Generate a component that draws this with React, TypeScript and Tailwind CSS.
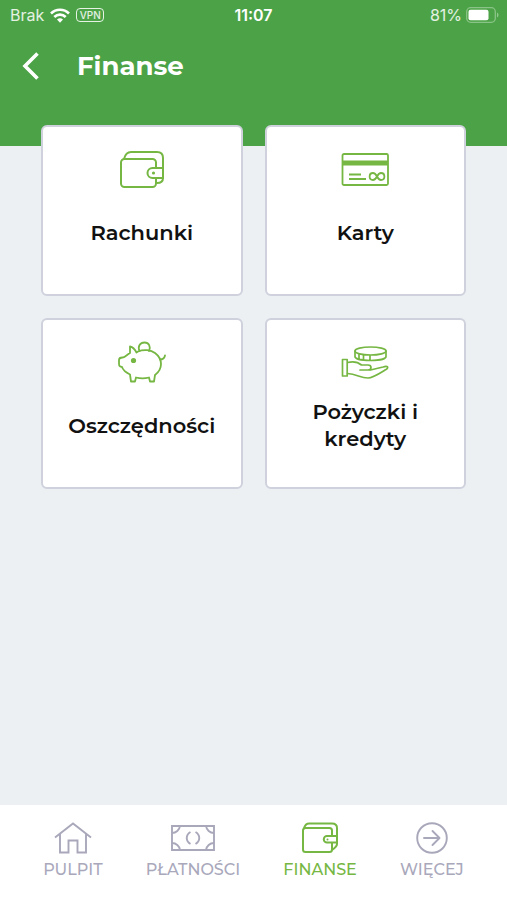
import type { ReactNode } from "react";

function WalletIcon({ className }: { className: string }) {
  return (
    <svg viewBox="0 0 48 48" className={className} fill="none" stroke="currentColor" strokeWidth="2" strokeLinejoin="round" aria-hidden="true">
      <rect x="3" y="13" width="35" height="28" rx="3.500" />
      <path d="M6 13c1-4 3-7 7-7h26c4 0 6 2 6 6v20c0 3-2 5-6 5" />
      <path d="M45 22v10H34.500a5 5 0 0 1 0-10z" fill="#fff" />
      <circle cx="35.500" cy="27" r="1.600" fill="currentColor" stroke="none" />
    </svg>
  );
}

function ActiveWalletIcon() {
  return (
    <svg viewBox="0 0 38 32" className="h-8 w-[38px]" fill="none" stroke="currentColor" strokeWidth="2" strokeLinejoin="round" aria-hidden="true">
      <rect x="2" y="6" width="29" height="24" rx="2.500" />
      <path d="M3 6c1-3 3-4.500 5-4.500h23c3.500 0 5 2 5 4.500v16c0 2.500-2 4-5 6" />
      <path d="M36 14v6.500H26a3.250 3.250 0 0 1 0-6.500z" fill="#fff" />
      <circle cx="26.500" cy="17.500" r="1" fill="currentColor" stroke="none" />
    </svg>
  );
}

function CardIcon() {
  return (
    <svg viewBox="0 0 48 48" className="size-12" fill="none" stroke="currentColor" strokeWidth="1.800" aria-hidden="true">
      <rect x="1.500" y="8" width="45.500" height="31" rx="1.500" />
      <path d="M1 17h46" strokeWidth="5" />
      <path d="M8 28.500h12M8 33h17" />
      <path d="M36 30.500c-1-2-2-3.500-4-3.500-4.500 0-4.500 7 0 7 2 0 3-1.500 4-3.500s2-3.500 4-3.500c4.500 0 4.500 7 0 7-2 0-3-1.500-4-3.500z" />
    </svg>
  );
}

function PiggyIcon() {
  return (
    <svg viewBox="0 0 48 48" className="size-12" fill="none" stroke="currentColor" strokeWidth="1.800" strokeLinecap="round" strokeLinejoin="round" aria-hidden="true">
      <path d="M20 12.500c6-2.500 13-1.500 17 1.500 4 3 6 7 6 11 0 5-2 8-6 11l-1 6.500h-4l-1-4c-4 1-9 1-13 0l-1 4h-4l-1-7C8 33.500 5 31 4 28c-3-.5-3-1.500-3-4v-3c0-1.500 1.500-2.500 3.500-2.500 2 0 4-2.500 7.500-4.500V7.500c3 .5 5 3 6.500 6z" />
      <path d="M21.500 12c-2-4.500.5-8.500 5-8.500S33 7.500 31 12" />
      <path d="M42 20.500c3 0 4.500-1.500 5-4" />
      <circle cx="15.500" cy="21.500" r="2.600" fill="currentColor" stroke="none" />
    </svg>
  );
}

function LoanIcon() {
  return (
    <svg viewBox="0 0 48 48" className="size-12" fill="none" stroke="currentColor" strokeWidth="1.700" strokeLinecap="round" strokeLinejoin="round" aria-hidden="true">
      <ellipse cx="29.500" cy="12" rx="15.500" ry="4" />
      <path d="M14 12v5.500c0 2.500 7 4 15.500 4S45 20 45 17.500V12M18 15v5M22.500 16v5M29 16.500v5" />
      <path d="M1.500 20.500h4.700V37H1.500zM6.500 23.500c6-1.500 10-1 14 2.500h6.500c4 0 4 5 0 5h-8" />
      <path d="M29.500 31L42 28c5-1.500 6 .5 3 2.500-5 3-13 8.500-18 8.500-8 0-11-4-20.500-4.500" />
    </svg>
  );
}

function HomeIcon() {
  return (
    <svg viewBox="0 0 38 32" className="h-8 w-[38px]" fill="none" stroke="currentColor" strokeWidth="1.900" aria-hidden="true">
      <path d="M1 15.500L19 1.500l18 14M6 12v18.500h8.500V18.500h9v12H32V12" />
    </svg>
  );
}

function BanknoteIcon() {
  return (
    <svg viewBox="0 0 44 32" className="h-8 w-11" fill="none" stroke="currentColor" strokeWidth="1.900" aria-hidden="true">
      <path d="M1 4h42v24H1z" />
      <path d="M9 4a8 8 0 0 1-8 7M35 4a8 8 0 0 0 8 7M9 28a8 8 0 0 0-8-7M35 28a8 8 0 0 1 8-7" />
      <path d="M19.500 10c-5 3-5 9 0 12M24.500 10c5 3 5 9 0 12" />
    </svg>
  );
}

function MoreIcon() {
  return (
    <svg viewBox="0 0 32 32" className="size-8" fill="none" stroke="currentColor" strokeWidth="1.900" aria-hidden="true">
      <circle cx="16" cy="16" r="14.800" />
      <path d="M8 16h15M16.500 9l7 7-7 7" strokeLinecap="round" strokeLinejoin="round" />
    </svg>
  );
}

function StatusBar() {
  return (
    <div className="grid h-[30px] grid-cols-3 items-center px-2 font-[Inter,sans-serif] text-base">
      <div className="flex items-center gap-1.5 pl-0.5 text-white/85">
        <span>Brak</span>
        <svg viewBox="0 0 20 15" className="h-[15px] w-5" fill="none" stroke="#fff" strokeWidth="2.600" role="img" aria-label="Wi-Fi">
          <path d="M1 5.500c5-5 13-5 18 0M4.300 9c3.300-3.200 8.100-3.200 11.400 0" />
          <path d="M7 11.500c2-1.600 4-1.600 6 0L10 14.800z" fill="#fff" stroke="none" />
        </svg>
        <span className="flex h-3.5 w-7 items-center justify-center rounded-sm border border-white/85 text-[10px] leading-3 font-medium">VPN</span>
      </div>
      <span className="text-center font-semibold">11:07</span>
      <div className="flex items-center justify-end gap-1 text-white/85">
        <span>81%</span>
        <svg viewBox="0 0 33 16" className="h-4 w-[33px]" role="img" aria-label="Bateria">
          <rect x=".7" y=".7" width="28.600" height="14.600" rx="4" fill="none" stroke="#fff" strokeOpacity=".35" strokeWidth="1.300" />
          <rect x="2.500" y="2.800" width="20" height="10.400" rx="2" fill="#fff" />
          <path d="M31 5.500c2 1 2 4 0 5z" fill="#fff" fillOpacity=".4" />
        </svg>
      </div>
    </div>
  );
}

function Tile({ icon, label }: { icon: ReactNode; label: string }) {
  return (
    <button className="flex h-[171px] flex-col items-center rounded-md border-2 border-[#cfd1dd] bg-white px-5 pt-[19px] text-[#76b743]">
      {icon}
      <span className="mt-[11px] flex h-[54px] items-center text-center text-[21px] leading-[27px] font-semibold text-[#111]">{label}</span>
    </button>
  );
}

function NavItem({ icon, label, active = false }: { icon: ReactNode; label: string; active?: boolean }) {
  return (
    <a
      href="#"
      aria-current={active ? "page" : undefined}
      className={`flex flex-col items-center gap-1.5 font-medium ${active ? "text-[#76b743]" : "text-[#a9a8bb]"}`}
    >
      {icon}
      <span className="text-base leading-5">{label}</span>
    </a>
  );
}

export default function App() {
  return (
    <div className="flex min-h-screen flex-col bg-[#ecf0f3] font-[Montserrat,Inter,sans-serif]">
      <header className="h-[146px] bg-[#4ca347] text-white">
        <StatusBar />
        <div className="flex h-[72px] items-center gap-[38px] pl-[22px]">
          <button aria-label="Wstecz">
            <svg viewBox="0 0 17 28" className="h-7 w-[17px]" fill="none" stroke="currentColor" strokeWidth="3.600" aria-hidden="true">
              <path d="M15.500 1.500L3 14l12.500 12.500" />
            </svg>
          </button>
          <h1 className="text-[26px] leading-8 font-bold">Finanse</h1>
        </div>
      </header>
      <main className="-mt-[21px] grid flex-1 grid-cols-2 content-start gap-[22px] px-[41px]">
        <Tile icon={<WalletIcon className="size-12" />} label="Rachunki" />
        <Tile icon={<CardIcon />} label="Karty" />
        <Tile icon={<PiggyIcon />} label="Oszczędności" />
        <Tile icon={<LoanIcon />} label="Pożyczki i kredyty" />
      </main>
      <nav className="flex h-[95px] items-start justify-evenly bg-white pt-[17px]">
        <NavItem icon={<HomeIcon />} label="PULPIT" />
        <NavItem icon={<BanknoteIcon />} label="PŁATNOŚCI" />
        <NavItem icon={<ActiveWalletIcon />} label="FINANSE" active />
        <NavItem icon={<MoreIcon />} label="WIĘCEJ" />
      </nav>
    </div>
  );
}
